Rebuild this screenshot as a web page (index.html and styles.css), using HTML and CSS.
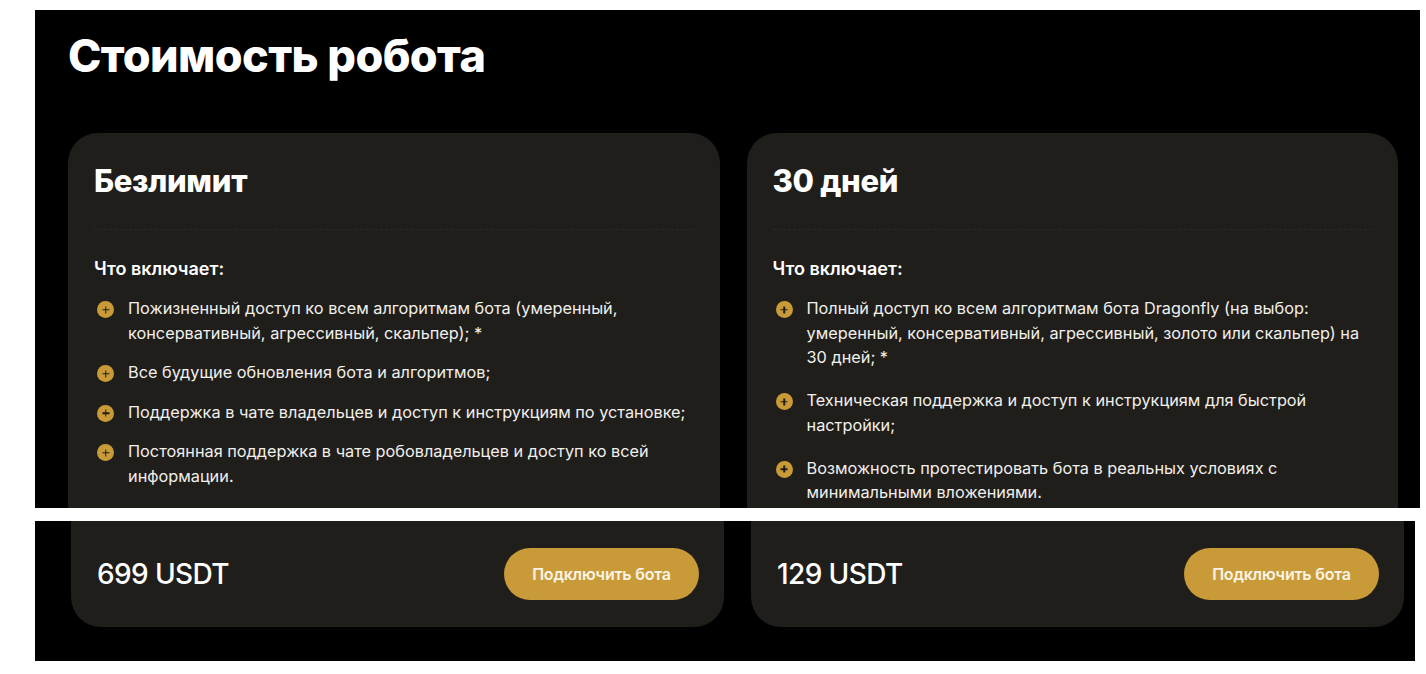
FILE: index.html
```html
<!DOCTYPE html>
<html>
    <head>
        <meta charset='UTF-8'>
        <link rel="stylesheet" href="styles.css">
    </head>
    <body>
        <section class="shot shot-top">
            <h1 class="title">Стоимость робота</h1>
            <div class="plans">
                <div class="plan">
                    <h2 class="plan-name">Безлимит</h2>
                    <div class="divider"></div>
                    <h3 class="plan-sub">Что включает:</h3>
                    <ul class="features">
                        <li><span class="plus"></span><span>Пожизненный доступ ко всем алгоритмам бота (умеренный, консервативный, агрессивный, скальпер); *</span></li>
                        <li><span class="plus"></span><span>Все будущие обновления бота и алгоритмов;</span></li>
                        <li><span class="plus"></span><span>Поддержка в чате владельцев и доступ к инструкциям по установке;</span></li>
                        <li><span class="plus"></span><span>Постоянная поддержка в чате робовладельцев и доступ ко всей информации.</span></li>
                    </ul>
                </div>
                <div class="plan">
                    <h2 class="plan-name">30 дней</h2>
                    <div class="divider"></div>
                    <h3 class="plan-sub">Что включает:</h3>
                    <ul class="features features-wide">
                        <li><span class="plus"></span><span>Полный доступ ко всем алгоритмам бота Dragonfly (на выбор: умеренный, консервативный, агрессивный, золото или скальпер) на 30 дней; *</span></li>
                        <li><span class="plus"></span><span>Техническая поддержка и доступ к инструкциям для быстрой настройки;</span></li>
                        <li><span class="plus"></span><span>Возможность протестировать бота в реальных условиях с минимальными вложениями.</span></li>
                    </ul>
                </div>
            </div>
        </section>
        <section class="shot shot-bottom">
            <div class="plans">
                <div class="plan-foot">
                    <div class="price">699 USDT</div>
                    <a class="btn" href="#">Подключить бота</a>
                </div>
                <div class="plan-foot">
                    <div class="price">129 USDT</div>
                    <a class="btn" href="#">Подключить бота</a>
                </div>
            </div>
        </section>
    </body>
</html>
```

FILE: styles.css
```css
html, body {
    width: 100%;
    height: 100%;
}

body {
    margin: 0;
    padding: 0;
    background: #fff;
    font-family: 'Inter', 'Noto Sans', sans-serif;
    color: #fff;
    -webkit-font-smoothing: antialiased;
}

.shot {
    background: #000;
    overflow: hidden;
    box-sizing: border-box;
}

.shot-top {
    height: 498px;
    margin: 10px 6px 0 35px;
    padding: 0 22px 0 33px;
}

.shot-bottom {
    height: 140px;
    margin: 13px 11px 0 35px;
    padding: 0 11px 0 36px;
}

.title {
    margin: 0;
    padding-top: 18px;
    font-size: 45px;
    line-height: 56px;
    font-weight: 800;
    letter-spacing: -0.6px;
}

.plans {
    display: grid;
    grid-template-columns: 1fr 1fr;
    gap: 27px;
}

.shot-top .plans {
    margin-top: 49px;
}

.plan {
    background: #201e1b;
    border-radius: 30px 30px 0 0;
    padding: 28px 26px 0;
    height: 420px;
}

.plan-name {
    margin: 0;
    font-size: 31px;
    line-height: 40px;
    font-weight: 800;
    letter-spacing: -0.3px;
}

.divider {
    margin: 28px 0 26px;
    border-top: 1px dashed #2c2a26;
}

.plan-sub {
    margin: 0 0 14px;
    font-size: 18px;
    line-height: 26px;
    font-weight: 600;
}

.features {
    list-style: none;
    margin: 0;
    padding: 0;
    font-size: 16.3px;
    line-height: 24.5px;
    color: #f2f0ec;
}

.features li {
    display: flex;
    gap: 14px;
    margin-bottom: 15px;
}

.features-wide li {
    margin-bottom: 18.5px;
}

.plus {
    flex: none;
    position: relative;
    width: 17px;
    height: 17px;
    margin: 5px 0 0 3px;
    border-radius: 50%;
    background: #c99b38;
}

.plus::before, .plus::after {
    content: '';
    position: absolute;
    left: 50%;
    top: 50%;
    background: #201e1b;
    transform: translate(-50%, -50%);
}

.plus::before {
    width: 7px;
    height: 1.5px;
}

.plus::after {
    width: 1.5px;
    height: 7px;
}

.plan-foot {
    display: flex;
    justify-content: space-between;
    align-items: center;
    height: 106px;
    padding: 0 25px 0 26px;
    background: #201e1b;
    border-radius: 0 0 30px 30px;
}

.price {
    font-size: 28px;
    font-weight: 500;
    letter-spacing: -0.6px;
}

.btn {
    display: flex;
    align-items: center;
    justify-content: center;
    width: 195px;
    height: 52px;
    border-radius: 26px;
    background: #c99b38;
    color: #fbf4e6;
    font-size: 16px;
    font-weight: 600;
    letter-spacing: -0.2px;
    text-decoration: none;
}
```
